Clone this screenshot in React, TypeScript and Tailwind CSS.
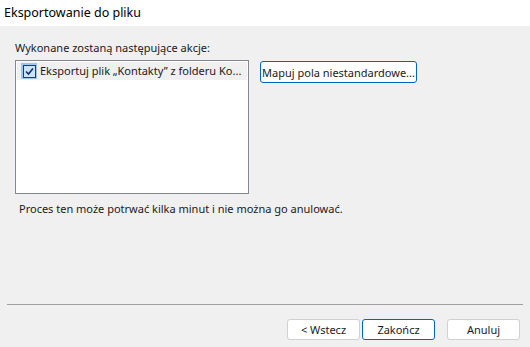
import React from 'react';

const font = { fontFamily: '"Noto Sans", "Open Sans", sans-serif' };

const DialogButton: React.FC<{ label: string; primary?: boolean; className?: string }> = ({ label, primary, className = '' }) => (
  <button
    className={`h-[21px] rounded-[3px] bg-white text-[11px] leading-none text-[#1a1a1a] whitespace-nowrap flex items-center justify-center ${
      primary ? 'border border-[#0067c0]' : 'border border-[#d0d0d0]'
    } ${className}`}
  >
    {label}
  </button>
);

export default function App() {
  return (
    <div className="w-[530px] h-[347px] bg-[#f0f0f0] flex flex-col text-[#1a1a1a]" style={font}>
      {/* Title */}
      <div className="h-[26px] bg-white flex items-center pl-[4px] text-[12.5px] text-black">
        Eksportowanie do pliku
      </div>

      <div className="pl-[15px] pt-[14px]">
        <div className="text-[11px] leading-[16px]">Wykonane zostaną następujące akcje:</div>

        <div className="flex items-start mt-[4px]">
          <div className="w-[234px] h-[134px] bg-white border border-[#828790] p-px">
            <div className="h-[18px] bg-[#f0f0f0] flex items-center pl-[4px] pr-[3px] text-[11px] whitespace-nowrap">
              <span className="w-[16px] h-[16px] bg-[#99c9ef] flex items-center justify-center mr-[3px]">
                <span className="w-[13px] h-[13px] border border-[#1c3d6e] bg-[#cce4f7] flex items-center justify-center">
                  <svg width="11" height="11" viewBox="0 0 11 11">
                    <path d="M2 5.5 L4.5 8 L9 2.5" fill="none" stroke="#16306b" strokeWidth="1.6" />
                  </svg>
                </span>
              </span>
              Eksportuj plik „Kontakty” z folderu Ko...
            </div>
          </div>

          <DialogButton label="Mapuj pola niestandardowe..." primary className="ml-[11px] mt-[1px] w-[157px] h-[22px] border-[1.5px] px-[2px]" />
        </div>

        <div className="text-[11px] leading-[16px] mt-[7px] pl-[4px]">
          Proces ten może potrwać kilka minut i nie można go anulować.
        </div>
      </div>

      <div className="flex-1" />

      <div className="mx-[7px] border-t border-[#a0a0a0]" />

      <div className="flex justify-end items-center pr-[10px] pt-[14px] pb-[7px]">
        <DialogButton label="< Wstecz" className="w-[73px]" />
        <DialogButton label="Zakończ" primary className="w-[73px] ml-[2px]" />
        <DialogButton label="Anuluj" className="w-[73px] ml-[12px]" />
      </div>
    </div>
  );
}
